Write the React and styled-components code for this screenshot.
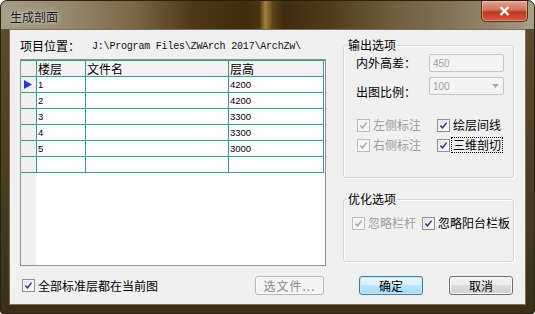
import { Fragment } from "react";
import styled, { createGlobalStyle } from "styled-components";

const GlobalStyle = createGlobalStyle`
  html, body { margin: 0; padding: 0; background: #fff; }
  body {
    font-family: "Noto Sans CJK SC", "Noto Sans", sans-serif;
    font-size: 12px;
    color: #000;
  }
  * { box-sizing: border-box; }
`;

const TEAL = "#3a9a8c";

const Window = styled.div`
  width: 535px;
  height: 314px;
  display: flex;
  flex-direction: column;
  border: 1px solid #2c2110;
  border-radius: 7px 7px 3px 3px;
  overflow: hidden;
  background: linear-gradient(180deg, #5f4d2f 0%, #4b3b21 60%, #3b2e17 100%);
`;

const TitleBar = styled.div`
  height: 28px;
  flex: none;
  display: flex;
  justify-content: space-between;
  align-items: flex-start;
  padding: 0 6px 0 9px;
  background: linear-gradient(
    90deg,
    #a69c87 0%,
    #978a70 12%,
    #7b6646 25%,
    #4e3818 36%,
    #3f2b0e 46%,
    #4a3413 48.5%,
    #a3823f 49.6%,
    #5c4418 51%,
    #3f2b0f 53%,
    #4f3c1c 62%,
    #6b5a3a 72%,
    #827257 84%,
    #958a72 93%,
    #a89e89 100%
  );
`;

const Title = styled.div`
  padding-top: 8px;
  line-height: 16px;
  font-size: 12px;
  color: #111;
  text-shadow: 0 0 6px rgba(255, 255, 255, 0.7), 0 0 2px rgba(255, 255, 255, 0.6);
`;

const CloseButton = styled.div`
  width: 47px;
  height: 21px;
  display: flex;
  align-items: center;
  justify-content: center;
  border: 1px solid #5a2a1c;
  border-top: none;
  border-radius: 0 0 5px 5px;
  background: linear-gradient(180deg, #e4a394 0%, #d2705c 45%, #c0391f 55%, #d45a3e 100%);
  box-shadow: inset 0 0 0 1px rgba(255, 220, 200, 0.45);
`;

const Frame = styled.div`
  flex: 1;
  display: flex;
  padding: 0 8px 8px 8px;
`;

const Client = styled.div`
  flex: 1;
  display: grid;
  grid-template-columns: 306px 171px;
  grid-template-rows: 246px 19px;
  column-gap: 17px;
  padding: 0 11px 9px 10px;
  background: #f0f0f0;
  border: 1px solid #7e6f55;
`;

const Column = styled.div`
  display: flex;
  flex-direction: column;
`;

const PathRow = styled.div`
  margin-top: 8px;
  height: 16px;
  display: flex;
  align-items: center;
`;

const PathLabel = styled.span`
  width: 72px;
  line-height: 16px;
`;

const PathText = styled.span`
  font-family: "Liberation Mono", monospace;
  font-size: 10px;
  letter-spacing: -0.2px;
  color: #111;
`;

const GridBox = styled.div`
  margin-top: 5px;
  height: 207px;
  border: 1px solid #8d9299;
  background: linear-gradient(90deg, #f0f0f0 15px, #fff 15px);
`;

const GridTable = styled.div`
  display: grid;
  grid-template-columns: 16px 49px 143px 95px;
  border-top: 1px solid ${TEAL};
`;

const Cell = styled.div`
  height: 16px;
  padding-left: 1px;
  border-right: 1px solid ${TEAL};
  border-bottom: 1px solid ${TEAL};
  background: ${(p) => (p.$head ? "#f3f3f3" : "#fff")};
  font-family: ${(p) =>
    p.$head ? '"Noto Sans CJK SC", sans-serif' : '"Liberation Sans", Arial, sans-serif'};
  font-size: ${(p) => (p.$head ? "12px" : "9.5px")};
  line-height: 15px;
  white-space: nowrap;
  overflow: hidden;
`;

const RowHead = styled.div`
  height: 16px;
  border-right: 1px solid ${TEAL};
  border-bottom: 1px solid ${TEAL};
  background: #f0f0f0;
  display: flex;
  align-items: center;
  padding-left: 3px;
`;

const Group = styled.div`
  position: relative;
  margin-top: ${(p) => p.$top}px;
  height: ${(p) => p.$height}px;
  border: 1px solid #d5d5d5;
  border-radius: 3px;
  box-shadow: inset 1px 1px 0 #fff, 1px 1px 0 #fff;
`;

const GroupTitle = styled.span`
  position: absolute;
  left: 3px;
  top: -9px;
  padding: 0 1px;
  line-height: 16px;
  background: #f0f0f0;
`;

const FieldRow = styled.div`
  display: grid;
  grid-template-columns: 73px 75px;
  height: 18px;
  padding-left: 12px;
  margin-top: ${(p) => p.$top}px;
`;

const FieldLabel = styled.span`
  line-height: 16px;
  padding-top: ${(p) => (p.$drop ? 7 : 1)}px;
  white-space: nowrap;
`;

const TextBox = styled.div`
  height: 18px;
  border: 1px solid #c4c4c4;
  border-radius: 2px;
  background: #f4f4f4;
  display: flex;
  align-items: center;
  justify-content: space-between;
  padding: 0 4px 0 3px;
  font-family: "Liberation Sans", Arial, sans-serif;
  font-size: 10px;
  color: #a2a2a2;
`;

const CheckGrid = styled.div`
  display: grid;
  grid-template-columns: ${(p) => p.$col}px auto;
  row-gap: 4px;
  padding-left: ${(p) => p.$left}px;
  margin-top: ${(p) => p.$top}px;
`;

const CheckLabel = styled.label`
  display: flex;
  align-items: center;
  height: 16px;
  gap: 2px;
  white-space: nowrap;
  color: ${(p) => (p.$disabled ? "#9d9d9d" : "#000")};
`;

const CheckBox = styled.span`
  width: 13px;
  height: 13px;
  flex: none;
  display: flex;
  align-items: center;
  justify-content: center;
  border: 1px solid ${(p) => (p.$disabled ? "#bcbcbc" : "#8e8f8f")};
  background: ${(p) =>
    p.$disabled
      ? "#f4f4f4"
      : "linear-gradient(135deg, #dcdcdc 0%, #f0f0f0 50%, #fdfdfd 100%)"};
  box-shadow: inset 0 0 0 1px ${(p) => (p.$disabled ? "#f7f7f7" : "#f4f4f4")};
`;

const CheckText = styled.span`
  line-height: 14px;
  padding: 0 1px;
  outline: ${(p) => (p.$focus ? "1px dotted #000" : "none")};
`;

const BottomLeft = styled.div`
  display: flex;
  align-items: center;
  justify-content: space-between;
  padding: 0 2px;
`;

const BottomRight = styled.div`
  display: flex;
  align-items: center;
  justify-content: flex-end;
  gap: 26px;
  padding-right: 1px;
`;

const Button = styled.div`
  width: ${(p) => p.$width || 64}px;
  height: 19px;
  display: flex;
  align-items: center;
  justify-content: center;
  border-radius: 3px;
  border: 1px solid ${(p) => (p.$default ? "#3c7fb1" : p.$disabled ? "#b5b8bb" : "#707070")};
  background: ${(p) =>
    p.$disabled
      ? "#f4f4f4"
      : p.$default
      ? "linear-gradient(180deg, #eaf6fd 0%, #d9f0fc 50%, #bee6fd 50%, #a7d9f5 100%)"
      : "linear-gradient(180deg, #f2f2f2 0%, #ebebeb 50%, #dddddd 50%, #cfcfcf 100%)"};
  box-shadow: inset 0 0 0 1px ${(p) => (p.$default ? "#c5e6f8" : "#fcfcfc")};
  color: ${(p) => (p.$disabled ? "#8b8b8b" : "#000")};
  letter-spacing: ${(p) => (p.$disabled ? "1px" : "0")};
`;

function Check({ checked, disabled, focus, children }) {
  return (
    <CheckLabel $disabled={disabled}>
      <CheckBox $disabled={disabled}>
        {checked && (
          <svg width="9" height="9" viewBox="0 0 9 9">
            <path
              d="M1.4 4.6 L3.6 6.8 L7.6 1.6"
              fill="none"
              stroke={disabled ? "#a9a9a9" : "#2b3f8e"}
              strokeWidth="1.5"
            />
          </svg>
        )}
      </CheckBox>
      <CheckText $focus={focus}>{children}</CheckText>
    </CheckLabel>
  );
}

const floors = [
  { n: "1", h: "4200" },
  { n: "2", h: "4200" },
  { n: "3", h: "3300" },
  { n: "4", h: "3300" },
  { n: "5", h: "3000" },
  { n: "", h: "" },
];

export default function App() {
  return (
    <>
      <GlobalStyle />
      <Window>
        <TitleBar>
          <Title>生成剖面</Title>
          <CloseButton>
            <svg width="11" height="10" viewBox="0 0 11 10">
              <path d="M1.5 1 L9.5 9 M9.5 1 L1.5 9" stroke="#fff" strokeWidth="2.4" />
            </svg>
          </CloseButton>
        </TitleBar>
        <Frame>
          <Client>
            <Column>
              <PathRow>
                <PathLabel>项目位置：</PathLabel>
                <PathText>J:\Program Files\ZWArch 2017\ArchZw\</PathText>
              </PathRow>
              <GridBox>
                <GridTable>
                  <RowHead />
                  <Cell $head>楼层</Cell>
                  <Cell $head>文件名</Cell>
                  <Cell $head>层高</Cell>
                  {floors.map((f, i) => (
                    <Fragment key={i}>
                      <RowHead>
                        {i === 0 && (
                          <svg width="8" height="9" viewBox="0 0 8 9">
                            <path d="M0 0 L8 4.5 L0 9 Z" fill="#1a3fd6" />
                          </svg>
                        )}
                      </RowHead>
                      <Cell>{f.n}</Cell>
                      <Cell />
                      <Cell>{f.h}</Cell>
                    </Fragment>
                  ))}
                </GridTable>
              </GridBox>
            </Column>

            <Column>
              <Group $top={15} $height={133}>
                <GroupTitle>输出选项</GroupTitle>
                <FieldRow $top={8}>
                  <FieldLabel>内外高差：</FieldLabel>
                  <TextBox>450</TextBox>
                </FieldRow>
                <FieldRow $top={5}>
                  <FieldLabel $drop>出图比例：</FieldLabel>
                  <TextBox>
                    100
                    <svg width="7" height="4" viewBox="0 0 7 4">
                      <path d="M0 0 L7 0 L3.5 4 Z" fill="#a8a8a8" />
                    </svg>
                  </TextBox>
                </FieldRow>
                <CheckGrid $col={80} $left={13} $top={22}>
                  <Check checked disabled>左侧标注</Check>
                  <Check checked>绘层间线</Check>
                  <Check checked disabled>右侧标注</Check>
                  <Check checked focus>三维剖切</Check>
                </CheckGrid>
              </Group>
              <Group $top={21} $height={63}>
                <GroupTitle>优化选项</GroupTitle>
                <CheckGrid $col={70} $left={8} $top={15}>
                  <Check checked disabled>忽略栏杆</Check>
                  <Check checked>忽略阳台栏板</Check>
                </CheckGrid>
              </Group>
            </Column>

            <BottomLeft>
              <Check checked>全部标准层都在当前图</Check>
              <Button $width={69} $disabled>选文件...</Button>
            </BottomLeft>
            <BottomRight>
              <Button $default>确定</Button>
              <Button>取消</Button>
            </BottomRight>
          </Client>
        </Frame>
      </Window>
    </>
  );
}
